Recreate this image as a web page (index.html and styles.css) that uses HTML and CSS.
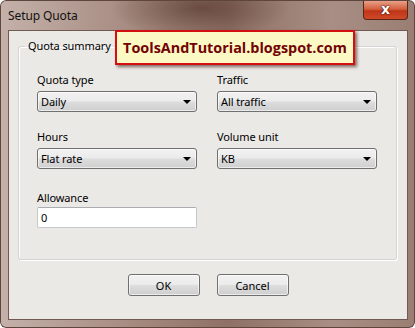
FILE: index.html
```html
<!DOCTYPE html>
<html lang="en">
<head>
    <meta charset="UTF-8">
    <title>Setup Quota</title>
    <link rel="stylesheet" href="styles.css">
</head>
<body>
    <div class="window">
        <!-- Title bar -->
        <div class="title-bar">
            <span class="title">Setup Quota</span>
            <span class="close-btn">x</span>
        </div>

        <!-- Dialog client area -->
        <div class="client">
            <fieldset class="group">
                <legend>Quota summary</legend>
                <div class="fields">
                    <div class="field">
                        <label>Quota type</label>
                        <div class="combo"><span>Daily</span><i class="arrow"></i></div>
                    </div>
                    <div class="field">
                        <label>Traffic</label>
                        <div class="combo"><span>All traffic</span><i class="arrow"></i></div>
                    </div>
                    <div class="field">
                        <label>Hours</label>
                        <div class="combo"><span>Flat rate</span><i class="arrow"></i></div>
                    </div>
                    <div class="field">
                        <label>Volume unit</label>
                        <div class="combo"><span>KB</span><i class="arrow"></i></div>
                    </div>
                    <div class="field field-last">
                        <label>Allowance</label>
                        <div class="textbox">0</div>
                    </div>
                </div>
            </fieldset>

            <div class="buttons">
                <button class="btn">OK</button>
                <button class="btn">Cancel</button>
            </div>
        </div>

        <!-- Watermark banner -->
        <div class="banner">ToolsAndTutorial.blogspot.com</div>
    </div>
</body>
</html>
```

FILE: styles.css
```css
body {
    margin: 0;
    background-color: #ffffff;
    font-family: "Noto Sans", Arial, sans-serif;
    font-size: 11px;
    letter-spacing: -0.1px;
    color: #000;
}

.window {
    position: relative;
    width: 415px;
    height: 328px;
    box-sizing: border-box;
    padding: 0 7px 8px 8px;
    border-radius: 6px;
    background:
        radial-gradient(ellipse 90px 30px at 200px 8px, rgba(70, 40, 30, 0.55), transparent),
        linear-gradient(to right, #c4b1a9 0%, #a3877d 35%, #8e7066 55%, #a88e84 80%, #9a7e74 100%);
    box-shadow: inset 0 0 0 1px #5e463f;
}

.title-bar {
    height: 30px;
    display: flex;
    align-items: flex-start;
    justify-content: space-between;
}

.title {
    margin-top: 7px;
    font-size: 12px;
    color: #111;
}

.close-btn {
    width: 45px;
    height: 19px;
    margin-top: 1px;
    border: 1px solid #5a2418;
    border-top: none;
    border-radius: 0 0 4px 4px;
    box-sizing: border-box;
    background: linear-gradient(to bottom, #e8a088 0%, #d4603e 45%, #bf3518 55%, #cf4a28 100%);
    color: #fff;
    font-family: "DejaVu Sans", sans-serif;
    font-weight: bold;
    font-size: 14px;
    line-height: 16px;
    text-align: center;
    text-shadow: 0 0 2px #3a1008, 0 0 1px #3a1008;
}

.client {
    height: 290px;
    box-sizing: border-box;
    border: 1px solid #6f5950;
    background-color: #ebe9e6;
    padding-top: 8px;
}

.group {
    margin: 0 10px 0 9px;
    padding: 20px 18px 31px 18px;
    border: 1px solid #d5d4d2;
    border-radius: 3px;
    box-shadow: inset 1px 1px 0 #fff, 1px 1px 0 #fff;
}

.group legend {
    padding: 0 3px;
    margin-left: -12px;
    line-height: 14px;
}

.fields {
    display: grid;
    grid-template-columns: 160px 160px;
    column-gap: 20px;
    row-gap: 18px;
}

.field label {
    display: block;
    line-height: 14px;
    margin-bottom: 4px;
}

.field-last {
    margin-top: 4px;
}

.field-last label {
    margin-bottom: 2px;
}

.combo {
    position: relative;
    height: 21px;
    box-sizing: border-box;
    border: 1px solid #707070;
    border-radius: 3px;
    background: linear-gradient(to bottom, #f2f2f2 0%, #ebebeb 48%, #dddddd 52%, #cfcfcf 100%);
    box-shadow: inset 0 0 0 1px rgba(255, 255, 255, 0.6);
    padding-left: 3px;
    line-height: 19px;
}

.arrow {
    position: absolute;
    right: 5px;
    top: 8px;
    width: 0;
    height: 0;
    border-left: 4px solid transparent;
    border-right: 4px solid transparent;
    border-top: 4px solid #000;
}

.textbox {
    height: 21px;
    box-sizing: border-box;
    border: 1px solid #c5c8cc;
    border-top-color: #abadb3;
    border-radius: 2px;
    background-color: #fff;
    padding-left: 3px;
    line-height: 19px;
}

.buttons {
    display: flex;
    justify-content: center;
    gap: 17px;
    margin-top: 14px;
}

.btn {
    width: 72px;
    height: 22px;
    border: 1px solid #707070;
    border-radius: 3px;
    background: linear-gradient(to bottom, #f2f2f2 0%, #ebebeb 48%, #dddddd 52%, #cfcfcf 100%);
    box-shadow: inset 0 0 0 1px rgba(255, 255, 255, 0.6);
    font-family: "Noto Sans", Arial, sans-serif;
    font-size: 11px;
    padding: 0;
}

.banner {
    position: absolute;
    left: 115px;
    top: 30px;
    width: 240px;
    height: 35px;
    box-sizing: border-box;
    border: 2px solid #d40f0f;
    background-color: #fdf9c4;
    box-shadow: 2px 2px 3px rgba(60, 20, 10, 0.6);
    color: #700303;
    font-family: "Open Sans", sans-serif;
    font-weight: bold;
    font-size: 14.4px;
    letter-spacing: 0;
    line-height: 31px;
    text-align: center;
}
```
